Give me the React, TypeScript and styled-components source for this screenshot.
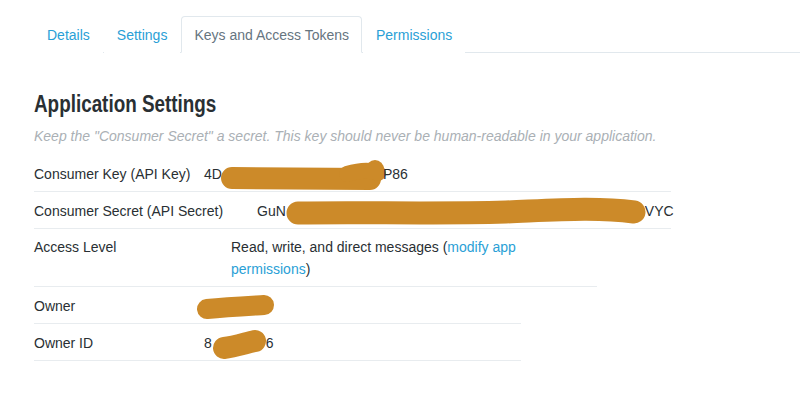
import React from 'react';
import styled, { createGlobalStyle } from 'styled-components';

const GlobalStyle = createGlobalStyle`
    body {
        margin: 0;
        background: #fff;
        font-family: "Liberation Sans", Arial, sans-serif;
        color: #292f33;
    }
`;

const Page = styled.div`
    padding: 16px 0 0 34px;
`;

const TabList = styled.ul`
    display: flex;
    list-style: none;
    margin: 0;
    padding: 0;
    border-bottom: 1px solid #e1e8ed;
`;

const Tab = styled.li<{ $active?: boolean }>`
    margin: 0 1px -1px 0;
    padding: 8px 12px 7px;
    font-size: 14px;
    line-height: 20px;
    border: 1px solid ${props => (props.$active ? '#e1e8ed' : 'transparent')};
    border-bottom-color: ${props => (props.$active ? '#fff' : 'transparent')};
    border-radius: 4px 4px 0 0;
    background: #fff;
    color: ${props => (props.$active ? '#66757f' : '#2a9fd6')};
    cursor: ${props => (props.$active ? 'default' : 'pointer')};
`;

// no condensed face installed, so squeeze the bold sans
const Heading = styled.h2`
    margin: 37px 0 0;
    font-weight: 700;
    font-size: 23px;
    line-height: 28px;
    color: #292f33;
    transform: scaleX(0.82);
    transform-origin: left center;
`;

const Note = styled.p`
    margin: 9px 0 10px;
    font-size: 14px;
    line-height: 18px;
    font-style: italic;
    color: #aab0b5;
`;

const Row = styled.div<{ $w: number; $multi?: boolean }>`
    display: flex;
    width: ${props => props.$w}px;
    padding: ${props => (props.$multi ? '7px 0 6px' : '8px 0 6px')};
    border-bottom: 1px solid #e8ecef;
    font-size: 14px;
    line-height: 22px;
`;

const Label = styled.div<{ $w: number }>`
    flex: 0 0 ${props => props.$w}px;
    color: #292f33;
`;

const Value = styled.div<{ $w?: number }>`
    ${props => (props.$w ? `width: ${props.$w}px;` : '')}
    color: #292f33;
    white-space: ${props => (props.$w ? 'normal' : 'nowrap')};
`;

const Link = styled.a`
    color: #2a9fd6;
    text-decoration: none;
`;

// marker scribble over redacted characters
const Blot = styled.svg`
    display: inline-block;
    vertical-align: middle;
    overflow: visible;
    margin: -9px 0;
`;

const ink = '#cc8a29';

const App = () => (
    <>
        <GlobalStyle />
        <Page>
            <TabList>
                <Tab>Details</Tab>
                <Tab>Settings</Tab>
                <Tab $active>Keys and Access Tokens</Tab>
                <Tab>Permissions</Tab>
            </TabList>

            <Heading>Application Settings</Heading>
            <Note>Keep the "Consumer Secret" a secret. This key should never be human-readable in your application.</Note>

            <Row $w={637}>
                <Label $w={170}>Consumer Key (API Key)</Label>
                <Value>
                    4D
                    <Blot width={161} height={32} viewBox="0 0 161 32">
                        <path d="M10 19 L148 20" stroke={ink} strokeWidth={22} strokeLinecap="round" fill="none" />
                        <circle cx={153} cy={10} r={9} fill={ink} />
                        <path d="M125 15 Q145 9 156 14" stroke={ink} strokeWidth={16} strokeLinecap="round" fill="none" />
                    </Blot>
                    P86
                </Value>
            </Row>

            <Row $w={637}>
                <Label $w={223}>Consumer Secret (API Secret)</Label>
                <Value>
                    GuN
                    <Blot width={359} height={30} viewBox="0 0 359 30">
                        <path
                            d="M12 16 C80 15 150 17 220 15 C270 13 310 10 348 15"
                            stroke={ink}
                            strokeWidth={23}
                            strokeLinecap="round"
                            fill="none"
                        />
                    </Blot>
                    VYC
                </Value>
            </Row>

            <Row $w={563} $multi>
                <Label $w={197}>Access Level</Label>
                <Value $w={290}>
                    Read, write, and direct messages (<Link href="#">modify app permissions</Link>)
                </Value>
            </Row>

            <Row $w={487}>
                <Label $w={163}>Owner</Label>
                <Value>
                    <Blot width={78} height={24} viewBox="0 0 78 24">
                        <path d="M10 14 C30 12 50 11 67 10" stroke={ink} strokeWidth={20} strokeLinecap="round" fill="none" />
                    </Blot>
                </Value>
            </Row>

            <Row $w={487}>
                <Label $w={170}>Owner ID</Label>
                <Value>
                    8
                    <Blot width={54} height={26} viewBox="0 0 54 26">
                        <path d="M12 17 C22 16 34 12 43 10" stroke={ink} strokeWidth={22} strokeLinecap="round" fill="none" />
                    </Blot>
                    6
                </Value>
            </Row>
        </Page>
    </>
);

export default App;
